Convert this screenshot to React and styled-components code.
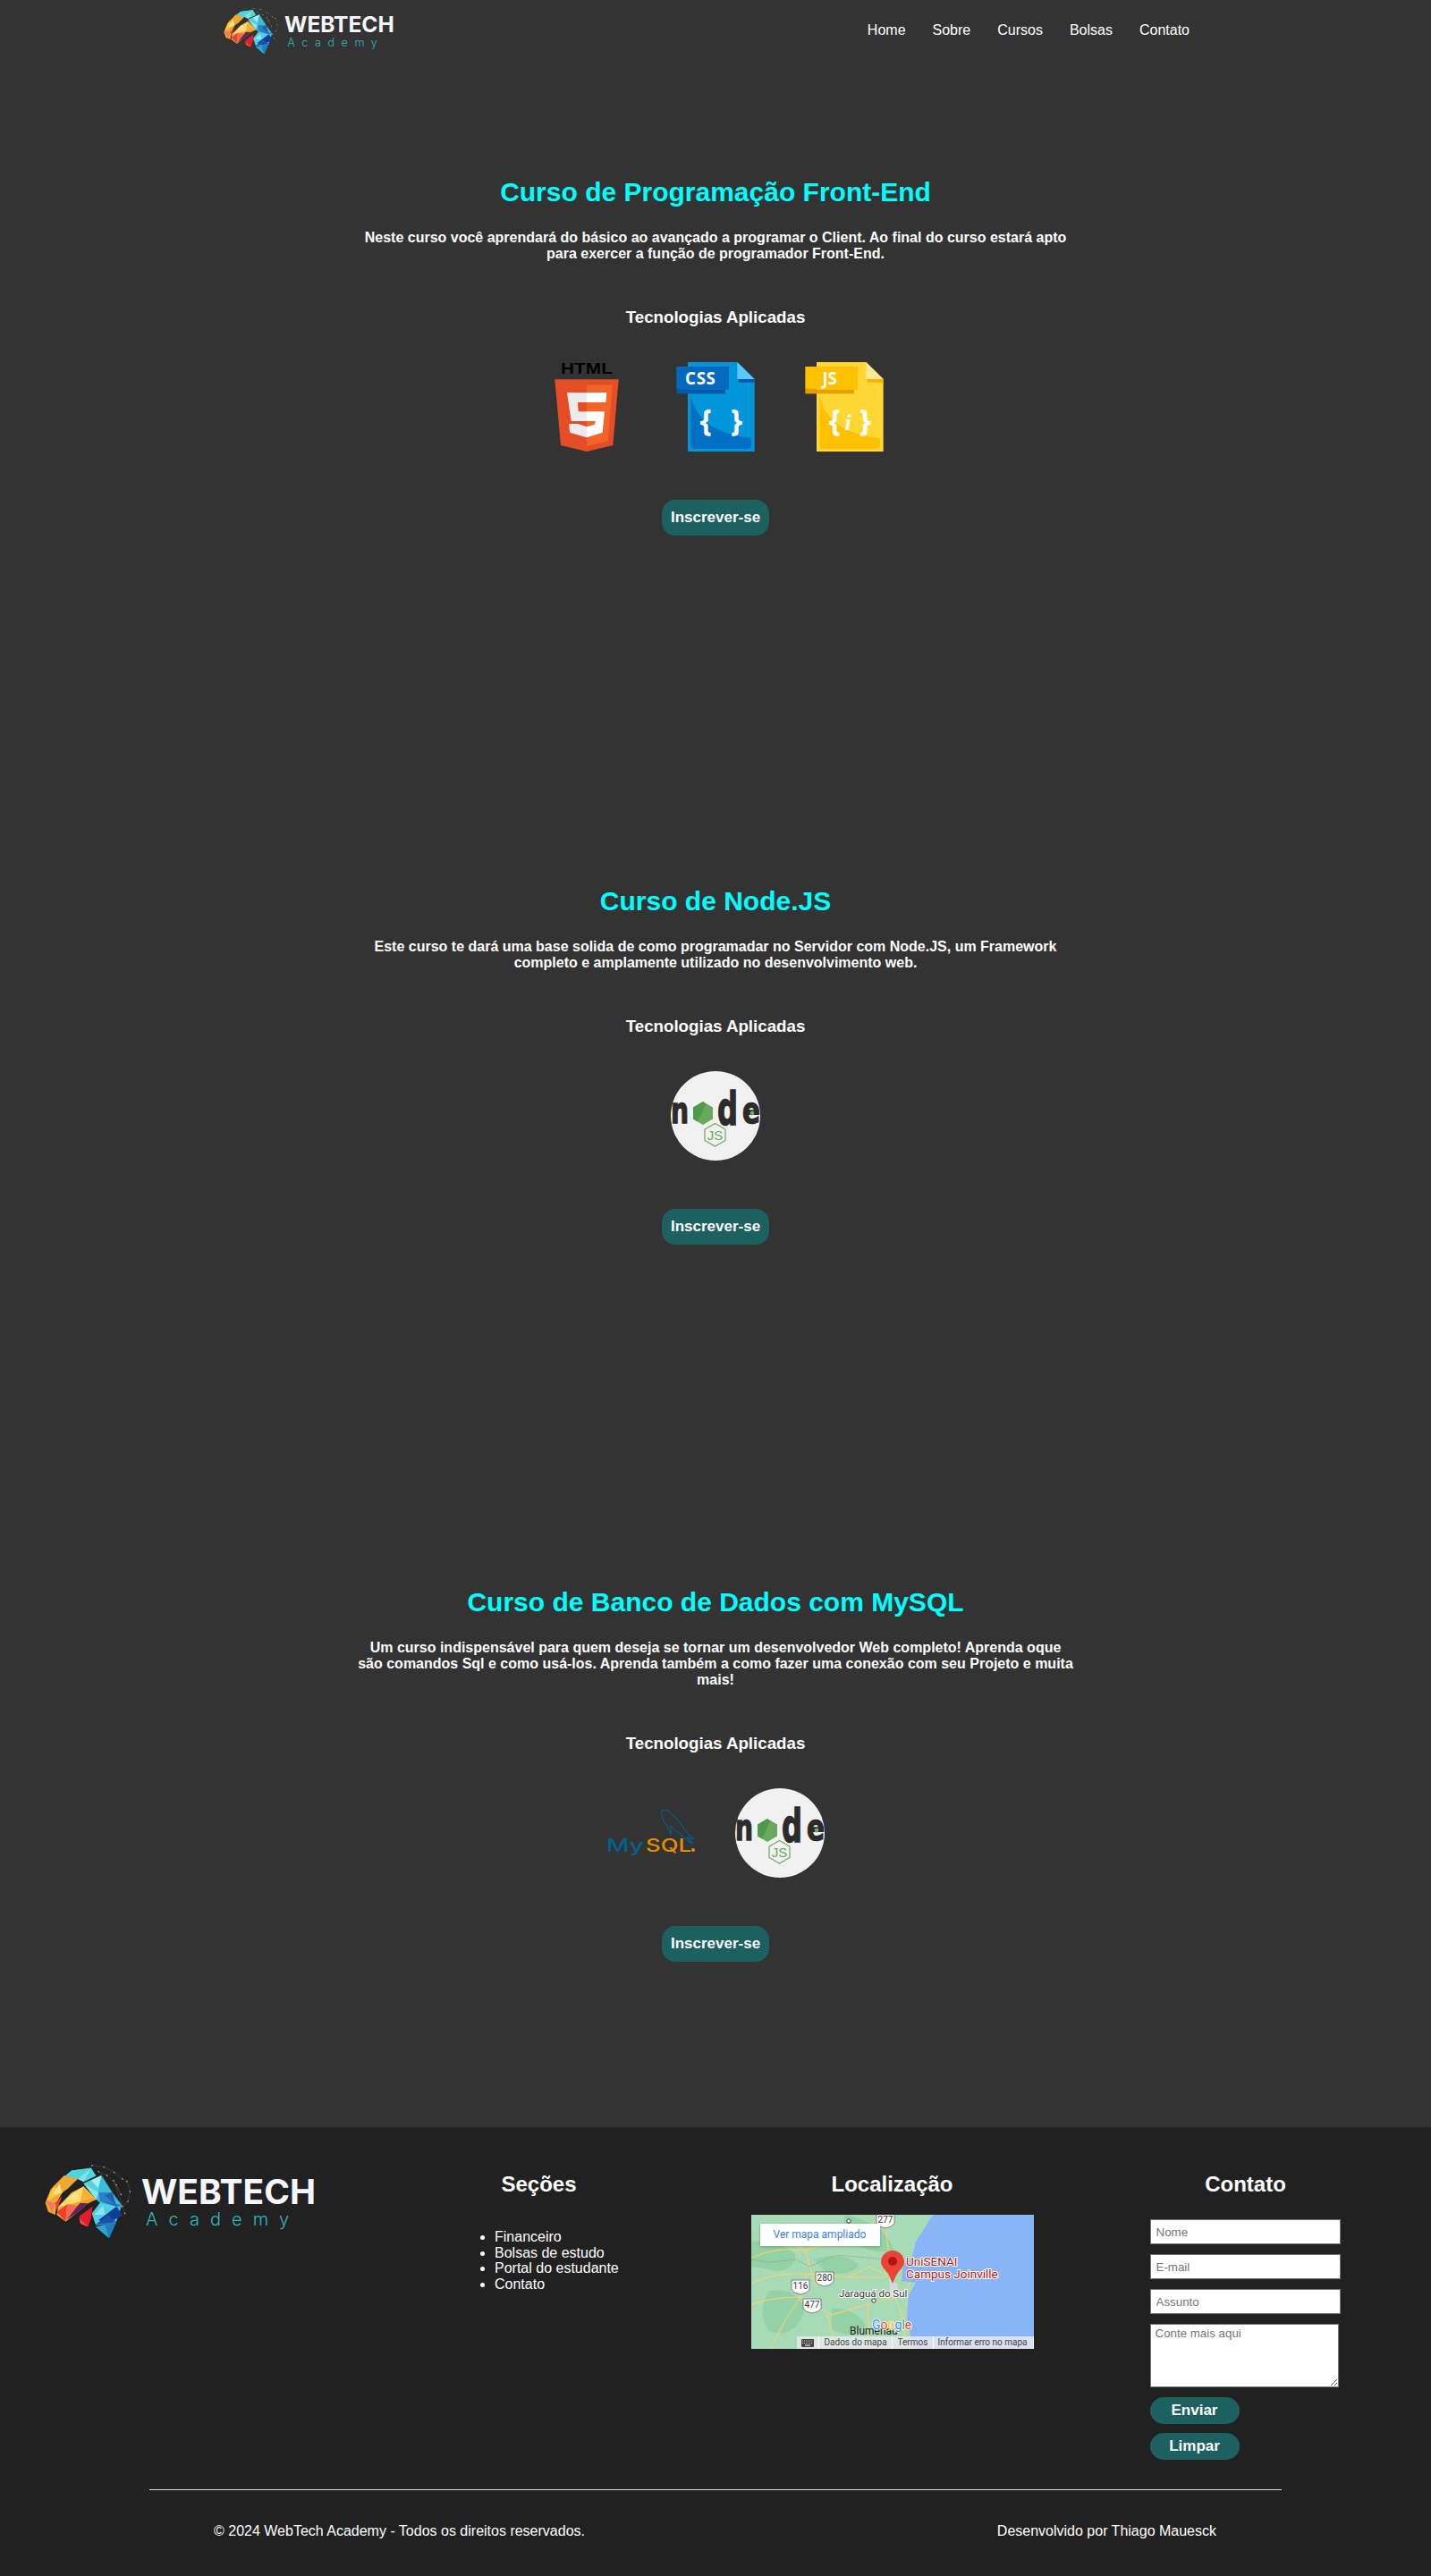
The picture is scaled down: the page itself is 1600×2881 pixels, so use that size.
import React from 'react';
import styled, { createGlobalStyle } from 'styled-components';

const GlobalStyle = createGlobalStyle`
  * {
    box-sizing: border-box;
  }

  body {
    margin: 0;
    background-color: #333;
    color: #fff;
    font-family: "Liberation Sans", Arial, sans-serif;
    font-size: 16px;
  }
`;

const Page = styled.div`
  width: 100%;
  min-height: 2881px;
  display: flex;
  flex-direction: column;
`;

const Header = styled.header`
  height: 66px;
  padding: 7px 270px 0 250px;
  display: flex;
  justify-content: space-between;
`;

const Nav = styled.nav`
  display: flex;
  gap: 30px;
  padding-top: 18px;

  a {
    color: #fff;
    line-height: 18px;
    text-decoration: none;
  }
`;

const LogoSvg = styled.svg`
  display: block;
  width: ${({ $width }) => $width}px;
  flex-shrink: 0;
`;

const Main = styled.main`
  flex: 1;
  padding-top: 132px;
`;

const Course = styled.section`
  display: flex;
  flex-direction: column;
  align-items: center;
  margin-bottom: ${({ $after }) => $after}px;
`;

const Title = styled.h1`
  margin: 0 0 25px;
  color: #0ff;
  font-size: 30px;
  line-height: 34px;
  font-weight: 700;
`;

const Description = styled.p`
  width: 800px;
  margin: 0 0 50px;
  font-weight: 700;
  line-height: 18px;
  text-align: center;
`;

const Subtitle = styled.h3`
  margin: 0 0 39px;
  font-size: 18.72px;
  line-height: 23px;
  font-weight: 700;
`;

const Techs = styled.div`
  display: flex;
  gap: 44px;
  margin-bottom: 54px;

  svg {
    display: block;
    width: 100px;
    height: 100px;
  }
`;

const Button = styled.button`
  width: ${({ $small }) => ($small ? 100 : 120)}px;
  height: ${({ $small }) => ($small ? 30 : 40)}px;
  padding: 0;
  border: 0;
  border-radius: 15px;
  background-color: #1c6060;
  color: #fff;
  font-family: inherit;
  font-size: 17px;
  font-weight: 700;
`;

const Footer = styled.footer`
  height: 502px;
  padding: 41px 10px 0;
  background-color: #212121;
`;

const Columns = styled.div`
  display: grid;
  grid-template-columns: repeat(4, 395px);
  height: 364px;
`;

const Column = styled.div`
  display: flex;
  flex-direction: column;
  align-items: ${({ $align }) => $align || 'center'};
`;

const LogoColumn = styled.div`
  padding-left: 40px;
`;

const ColumnTitle = styled.h3`
  align-self: center;
  margin: 9px 0 ${({ $after }) => $after}px;
  font-size: 24px;
  line-height: 27px;
  font-weight: 700;
`;

const LinkList = styled.ul`
  margin: 0 0 0 108px;
  padding: 0 0 0 40px;
  line-height: 17.6px;
`;

const MapFrame = styled.div`
  position: relative;
  width: 316px;
  height: 150px;
  overflow: hidden;

  > svg {
    display: block;
  }
`;

const MapCard = styled.div`
  position: absolute;
  top: 10px;
  left: 10px;
  width: 134px;
  height: 25px;
  padding-left: 15px;
  background-color: #fff;
  box-shadow: 0 1px 3px rgba(0, 0, 0, 0.25);
  color: #3b7ded;
  font-family: Roboto, sans-serif;
  font-size: 12px;
  line-height: 25px;
`;

const MapBar = styled.div`
  position: absolute;
  right: 0;
  bottom: 0;
  width: 265px;
  height: 14px;
  display: flex;
  background-color: rgba(232, 234, 237, 0.82);
  color: #444;
  font-family: Roboto, sans-serif;
  font-size: 10px;
  line-height: 14px;
`;

const MapBarItem = styled.span`
  display: flex;
  align-items: center;
  width: ${({ $width }) => $width}px;
  padding-left: ${({ $pad }) => $pad}px;
  border-right: 1px solid #fff;
  white-space: nowrap;
`;

const ContactForm = styled.form`
  width: 214px;
  display: flex;
  flex-direction: column;
  align-items: flex-start;
`;

const Field = styled.input`
  width: 213px;
  height: 28px;
  margin-bottom: 11px;
  padding: 1px 6px;
  border: 1px solid #767676;
  background: #fff;
  font-family: inherit;
  font-size: 13.33px;

  &::placeholder {
    color: #757575;
  }
`;

const Message = styled.textarea`
  display: block;
  width: 211px;
  height: 71px;
  margin-bottom: 11px;
  padding: 2px 5px;
  border: 1px solid #767676;
  background: #fff;
  font-family: inherit;
  font-size: 13.33px;

  &::placeholder {
    color: #757575;
  }
`;

const FormButton = styled(Button)`
  margin-bottom: 10px;
`;

const Divider = styled.hr`
  width: 1266px;
  height: 1px;
  margin: 0 auto;
  border: 0;
  background-color: #ddd;
`;

const Credits = styled.div`
  display: flex;
  justify-content: space-between;
  padding: 37px 230px 0 229px;
  line-height: 18px;
`;

const Triangles = ({ items }) =>
  items.map(([fill, points]) => <polygon key={fill + points} fill={fill} points={points} />);

const BRAIN = [
  // base lobes
  ['#f0a92e', '62,250 80,205 125,158 172,168 120,212 100,250 95,290 72,280'],
  ['#f0a92e', '100,290 105,262 150,215 190,195 232,238 205,252 165,285 130,313'],
  ['#52d3e0', '130,158 150,142 215,133 232,160 190,180 172,168'],
  ['#39bdd8', '190,185 250,158 285,215 318,258 300,312 270,320 232,325 218,285 245,250 232,238'],
  ['#e51c2a', '175,295 220,262 215,300 205,330 180,320'],
  // facets
  ['#f6c944', '65,245 90,195 130,160 120,215'],
  ['#f0a92e', '90,195 130,160 170,170 120,215'],
  ['#fbd96a', '120,215 170,170 140,200'],
  ['#ffe08a', '85,225 110,185 118,215'],
  ['#f0a92e', '65,245 120,215 95,250'],
  ['#ee7a5f', '65,245 95,250 85,285'],
  ['#e63946', '95,250 118,228 100,275'],
  ['#52d3e0', '130,160 150,142 215,135 170,170'],
  ['#7fe3ea', '170,170 215,135 190,180'],
  ['#fbd96a', '105,265 150,220 190,195 180,245'],
  ['#ffe08a', '130,240 165,212 172,240'],
  ['#f5b335', '190,195 232,240 180,250'],
  ['#f29f25', '180,245 232,232 205,252'],
  ['#e8412f', '100,280 135,255 130,312'],
  ['#f26a4f', '135,255 175,260 130,312'],
  ['#6b1f54', '135,305 178,250 205,252 165,285'],
  ['#52d3e0', '190,185 250,158 240,215'],
  ['#8ae6ec', '190,185 240,215 232,240'],
  ['#a5eef2', '215,175 250,158 238,200'],
  ['#39bdd8', '250,158 285,215 240,215'],
  ['#2c7fc4', '240,215 285,215 300,260 245,245'],
  ['#1e62ad', '262,225 285,215 300,260'],
  ['#f24a45', '175,300 205,330 180,320'],
  ['#52cfe0', '218,285 245,250 300,262 230,322'],
  ['#8ae6ec', '225,290 255,260 262,290'],
  ['#1f6fb8', '245,245 318,258 300,262'],
  ['#123a96', '240,308 300,262 320,292 270,318'],
  ['#1c4fae', '232,322 270,290 300,315'],
  ['#2ca6d6', '230,330 300,312 275,368'],
  ['#1b7ebd', '262,325 300,312 275,368'],
];

const BRAIN_DOTS = [
  [218, 125], [258, 130], [292, 148], [320, 170], [335, 178], [345, 212], [338, 245],
  [320, 262], [240, 145], [268, 158], [300, 190], [315, 222], [290, 175], [328, 285],
];

function Logo({ width }) {
  return (
    <LogoSvg $width={width} viewBox="0 0 305 90" aria-label="WebTech Academy">
      <svg x="0" y="0" width="97" height="84" viewBox="60 120 290 250">
        <Triangles items={BRAIN} />
        <polyline
          fill="none"
          stroke="#555"
          strokeWidth="1.5"
          points={BRAIN_DOTS.map(p => p.join(',')).join(' ')}
        />
        {BRAIN_DOTS.map(([cx, cy]) => (
          <circle key={cx + '-' + cy} cx={cx} cy={cy} r="2.5" fill="#a8a8a8" />
        ))}
      </svg>
      <text
        x="108"
        y="45"
        fill="#f5f6fb"
        fontFamily="Inter, sans-serif"
        fontWeight="700"
        fontSize="38"
        textLength="195"
        lengthAdjust="spacingAndGlyphs"
      >
        WEBTECH
      </text>
      <text
        x="113"
        y="69"
        fill="#2fb8c2"
        fontFamily="Inter, sans-serif"
        fontWeight="300"
        fontSize="20"
        textLength="160"
      >
        Academy
      </text>
    </LogoSvg>
  );
}

function HtmlIcon() {
  return (
    <svg viewBox="138 105 300 300" aria-label="HTML5">
      <text x="201" y="144" fill="#000" fontFamily="Liberation Sans, sans-serif" fontWeight="700" fontSize="50" textLength="174" lengthAdjust="spacingAndGlyphs">
        HTML
      </text>
      <polygon fill="#e44d26" points="181,163 395,163 376,384 288,405 201,384" />
      <polygon fill="#f16529" points="288,181 375,181 359,370 288,388" />
      <polygon fill="#ebebeb" points="222,207 288,207 288,240 258,240 260,271 288,271 288,303 236,303" />
      <polygon fill="#ebebeb" points="259,312 288,322 288,358 231,341 229,312" />
      <polygon fill="#fff" points="288,207 355,207 352,240 288,240" />
      <polygon fill="#fff" points="288,271 348,271 341,341 288,358 288,322 315,314 317,303 288,303" />
    </svg>
  );
}

const BRACE = { fill: '#fff', fontFamily: 'Open Sans, sans-serif', fontWeight: 700, fontSize: 100, textAnchor: 'middle' };

function CssIcon() {
  return (
    <svg viewBox="570 105 300 300" aria-label="CSS">
      <polygon fill="#0096d9" points="627,105 793,105 851,162 851,405 627,405" />
      <path fill="#006fc4" d="M637 215 Q660 340 840 360 L840 385 Q840 396 828 396 L650 396 Q637 396 637 385 Z" />
      <polygon fill="#0058a6" points="797,162 851,162 851,173 797,173" />
      <polygon fill="#5ac8ff" points="793,105 851,162 793,162" />
      <rect x="589" y="197" width="164" height="14" fill="#0058a6" />
      <rect x="589" y="120" width="176" height="77" fill="#0469bd" />
      <text x="670" y="179" textAnchor="middle" fill="#fff" fontFamily="Open Sans, sans-serif" fontWeight="700" fontSize="56" letterSpacing="2">
        CSS
      </text>
      <text x="687" y="336" {...BRACE}>{'{'}</text>
      <text x="791" y="336" {...BRACE}>{'}'}</text>
    </svg>
  );
}

function JsIcon() {
  return (
    <svg viewBox="1002 105 300 300" aria-label="JS">
      <polygon fill="#ffd633" points="1059,105 1225,105 1283,162 1283,405 1059,405" />
      <path fill="#ffc000" d="M1069 215 Q1092 340 1272 360 L1272 385 Q1272 396 1260 396 L1082 396 Q1069 396 1069 385 Z" />
      <polygon fill="#f5b000" points="1229,162 1283,162 1283,173 1229,173" />
      <polygon fill="#ffe993" points="1225,105 1283,162 1225,162" />
      <rect x="1021" y="197" width="164" height="14" fill="#e59f00" />
      <rect x="1021" y="120" width="176" height="77" fill="#ffc000" />
      <text x="1103" y="180" textAnchor="middle" fill="#fff" fontFamily="Open Sans, sans-serif" fontWeight="700" fontSize="56">
        JS
      </text>
      <text x="1119" y="336" {...BRACE}>{'{'}</text>
      <text x="1223" y="336" {...BRACE}>{'}'}</text>
      <text x="1164" y="332" textAnchor="middle" fill="#fff" fontFamily="Liberation Serif, serif" fontStyle="italic" fontWeight="700" fontSize="76">
        i
      </text>
    </svg>
  );
}

const NODE_FONT = {
  fill: '#2b2b2b',
  stroke: '#2b2b2b',
  strokeWidth: 1.4,
  fontFamily: 'DejaVu Sans, sans-serif',
  fontWeight: 700,
  lengthAdjust: 'spacingAndGlyphs',
};

function NodeIcon() {
  return (
    <svg viewBox="0 0 100 100" aria-label="Node.js">
      <circle cx="50" cy="50" r="50" fill="#f1f1f1" />
      <text x="0" y="58" fontSize="40" textLength="20" {...NODE_FONT}>n</text>
      <polygon fill="#6aa85f" points="36,34 47,40.5 47,53.5 36,60 25,53.5 25,40.5" />
      <polygon fill="#4c9a4a" points="36,34 25,40.5 25,53.5 30,56.5 39,37" />
      <text x="52" y="60" fontSize="52" textLength="23" {...NODE_FONT}>d</text>
      <text x="80" y="58" fontSize="40" textLength="20" {...NODE_FONT}>e</text>
      <circle cx="91" cy="47" r="2.4" fill="#6aa85f" />
      <polygon fill="none" stroke="#6aa85f" strokeWidth="1.2" points="49.5,58.5 61,65 61,77.5 49.5,84 38,77.5 38,65" />
      <text x="49.5" y="76.5" textAnchor="middle" fill="#6aa85f" fontFamily="Liberation Sans, sans-serif" fontSize="15">
        JS
      </text>
    </svg>
  );
}

function MysqlIcon() {
  return (
    <svg viewBox="0 0 100 100" aria-label="MySQL">
      <path
        fill="none"
        stroke="#00618a"
        strokeWidth="1.1"
        d="M62 25 Q68 22 73 29 Q80 34 87 46 Q92 52 98 57 L90 55 L97 62 Q88 58 84 52 Q76 47 72 42 L72 52 L68 42 Q60 33 62 25 Z"
      />
      <text x="0" y="71" fill="#00618a" fontFamily="Inter, sans-serif" fontWeight="500" fontSize="20" textLength="42" lengthAdjust="spacingAndGlyphs">
        My
      </text>
      <text x="44" y="71" fill="#e48e00" fontFamily="Inter, sans-serif" fontWeight="500" fontSize="20" textLength="51" lengthAdjust="spacingAndGlyphs">
        SQL
      </text>
      <circle cx="97" cy="69" r="2" fill="#e48e00" />
    </svg>
  );
}

const shieldFont = { fontFamily: 'Roboto, sans-serif', fontSize: 10, fill: '#333', textAnchor: 'middle' };

function Shield({ x, y, label }) {
  return (
    <g>
      <path d={`M${x - 10} ${y - 7} h20 v11 q-3 4 -10 5 q-7 -1 -10 -5 Z`} fill="#fff" stroke="#666" strokeWidth="0.8" />
      <text x={x} y={y + 3} {...shieldFont}>
        {label}
      </text>
    </g>
  );
}

const ROADS = [
  'M0 76 Q30 64 62 66 T108 70 L150 70',
  'M0 48 Q30 35 58 40 L110 26 L130 14 L150 0',
  'M150 0 L152 30 L158 70 L160 90 L170 115 L172 150',
  'M62 66 L55 92 L38 118 L22 150',
  'M0 100 Q25 92 55 92 L90 112 L130 100 L160 92',
  'M108 70 L132 58 L158 70',
  'M85 112 L95 150',
  'M22 24 L60 38 L72 80',
  'M130 100 L132 130 L128 150',
  'M190 60 L170 86 L160 90',
];

const PATCHES = [
  'M0 30 Q30 25 50 45 Q45 70 15 60 L0 58 Z',
  'M70 50 Q100 40 120 55 Q115 68 85 66 Z',
  'M20 85 Q50 80 60 105 Q50 140 20 130 Q5 110 20 85 Z',
  'M105 0 Q150 10 160 40 Q130 45 115 30 Q100 15 105 0 Z',
  'M90 105 Q120 105 128 125 Q110 140 90 128 Z',
];

function LocationMap() {
  return (
    <MapFrame>
      <svg width="316" height="150" viewBox="0 0 316 150" aria-label="Mapa">
        <rect width="316" height="150" fill="#a8dab5" />
        {PATCHES.map(d => (
          <path key={d} d={d} fill="#94d2a5" />
        ))}
        {ROADS.map(d => (
          <path key={d} d={d} fill="none" stroke="#fdd663" strokeWidth="1" />
        ))}
        <path
          d="M0 50 L20 53 L50 50 L65 58 L95 45 L130 48 L150 50"
          fill="none"
          stroke="#7d8f85"
          strokeWidth="0.8"
          strokeDasharray="1.5 1.5"
        />
        <path
          fill="#8ab4f8"
          d="M203 0 L193 16 L184 30 L180 46 L170 56 L168 74 L184 76 L176 90 L174 115 L178 135 L180 150 L316 150 L316 0 Z"
        />
        <path fill="#d5d8db" d="M154 72 L164 78 L162 92 L156 92 Z" />
        <circle cx="109" cy="7" r="2.2" fill="#fff" stroke="#333" />
        <circle cx="137" cy="96" r="2.2" fill="#fff" stroke="#333" />
        <Shield x={150} y={6} label="277" />
        <Shield x={82} y={71} label="280" />
        <Shield x={55} y={80} label="116" />
        <Shield x={68} y={101} label="477" />
        <path
          fill="#ea4335"
          d="M158 77 Q153 64 148 60 Q145 56 145 53 A13 13 0 0 1 171 53 Q171 56 168 60 Q163 64 158 77 Z"
        />
        <circle cx="158" cy="52" r="5" fill="#b31412" />
        <g fontFamily="Roboto, sans-serif" fill="#b31412" fontSize="13.5" stroke="#fff" strokeWidth="2" paintOrder="stroke">
          <text x="173" y="57">UniSENAI</text>
          <text x="173" y="71">Campus Joinville</text>
        </g>
        <text x="98" y="92" fontFamily="Roboto, sans-serif" fontSize="11.5" fill="#333" stroke="#fff" strokeWidth="2" paintOrder="stroke">
          Jaraguá do Sul
        </text>
        <text x="110" y="134" fontFamily="Roboto, sans-serif" fontSize="12" fill="#222">
          Blumenau
        </text>
        <text x="135" y="128" fontFamily="Roboto, sans-serif" fontSize="14" stroke="#fff" strokeWidth="1.5" paintOrder="stroke">
          <tspan fill="#4285f4">G</tspan>
          <tspan fill="#ea4335">o</tspan>
          <tspan fill="#fbbc05">o</tspan>
          <tspan fill="#4285f4">g</tspan>
          <tspan fill="#34a853">l</tspan>
          <tspan fill="#ea4335">e</tspan>
        </text>
      </svg>
      <MapCard>Ver mapa ampliado</MapCard>
      <MapBar>
        <MapBarItem $width={25} $pad={5}>
          <svg width="14" height="9" viewBox="0 0 14 9">
            <rect width="14" height="9" rx="1" fill="#444" />
            <path d="M1 2h12M1 4.5h12" stroke="#fff" strokeWidth="0.8" strokeDasharray="1 1" />
            <path d="M4 7h6" stroke="#fff" />
          </svg>
        </MapBarItem>
        <MapBarItem $width={82} $pad={6}>Dados do mapa</MapBarItem>
        <MapBarItem $width={46} $pad={6}>Termos</MapBarItem>
        <MapBarItem $width={112} $pad={5}>Informar erro no mapa</MapBarItem>
      </MapBar>
    </MapFrame>
  );
}

const COURSES = [
  {
    title: 'Curso de Programação Front-End',
    text: 'Neste curso você aprendará do básico ao avançado a programar o Client. Ao final do curso estará apto para exercer a função de programador Front-End.',
    icons: [HtmlIcon, CssIcon, JsIcon],
    after: 392,
  },
  {
    title: 'Curso de Node.JS',
    text: 'Este curso te dará uma base solida de como programadar no Servidor com Node.JS, um Framework completo e amplamente utilizado no desenvolvimento web.',
    icons: [NodeIcon],
    after: 383,
  },
  {
    title: 'Curso de Banco de Dados com MySQL',
    text: 'Um curso indispensável para quem deseja se tornar um desenvolvedor Web completo! Aprenda oque são comandos Sql e como usá-los. Aprenda também a como fazer uma conexão com seu Projeto e muita mais!',
    icons: [MysqlIcon, NodeIcon],
    after: 185,
  },
];

export default function App() {
  return (
    <Page>
      <GlobalStyle />
      <Header>
        <Logo width={192} />
        <Nav>
          <a href="#home">Home</a>
          <a href="#sobre">Sobre</a>
          <a href="#cursos">Cursos</a>
          <a href="#bolsas">Bolsas</a>
          <a href="#contato">Contato</a>
        </Nav>
      </Header>

      <Main>
        {COURSES.map(course => (
          <Course key={course.title} $after={course.after}>
            <Title>{course.title}</Title>
            <Description>{course.text}</Description>
            <Subtitle>Tecnologias Aplicadas</Subtitle>
            <Techs>
              {course.icons.map((Icon, i) => (
                <Icon key={i} />
              ))}
            </Techs>
            <Button>Inscrever-se</Button>
          </Course>
        ))}
      </Main>

      <Footer>
        <Columns>
          <LogoColumn>
            <Logo width={305} />
          </LogoColumn>
          <Column $align="flex-start">
            <ColumnTitle $after={37}>Seções</ColumnTitle>
            <LinkList>
              <li>Financeiro</li>
              <li>Bolsas de estudo</li>
              <li>Portal do estudante</li>
              <li>Contato</li>
            </LinkList>
          </Column>
          <Column>
            <ColumnTitle $after={21}>Localização</ColumnTitle>
            <LocationMap />
          </Column>
          <Column>
            <ColumnTitle $after={26}>Contato</ColumnTitle>
            <ContactForm>
              <Field placeholder="Nome" />
              <Field placeholder="E-mail" />
              <Field placeholder="Assunto" />
              <Message placeholder="Conte mais aqui" />
              <FormButton $small>Enviar</FormButton>
              <FormButton $small type="reset">Limpar</FormButton>
            </ContactForm>
          </Column>
        </Columns>
        <Divider />
        <Credits>
          <span>© 2024 WebTech Academy - Todos os direitos reservados.</span>
          <span>Desenvolvido por Thiago Mauesck</span>
        </Credits>
      </Footer>
    </Page>
  );
}
